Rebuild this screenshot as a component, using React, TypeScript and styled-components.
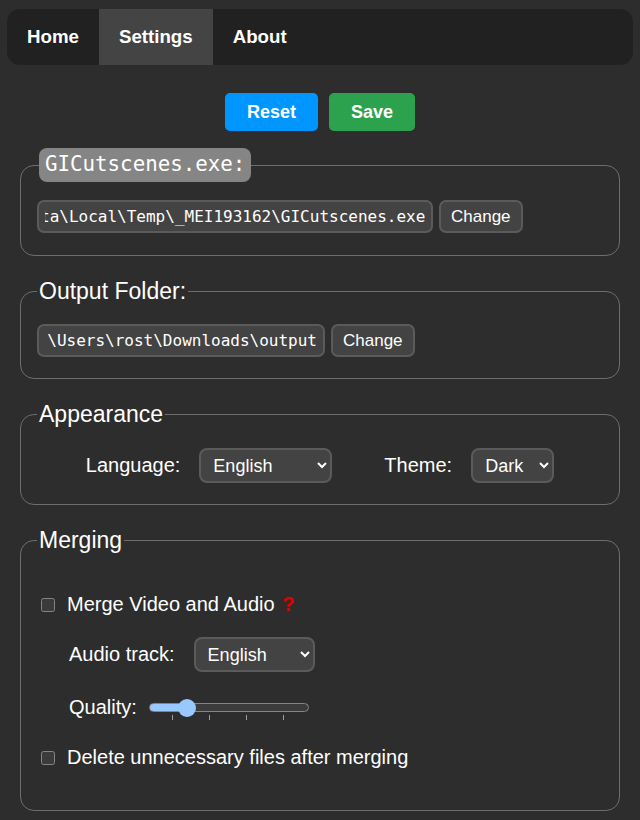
import React, { useEffect, useRef, useState } from "react"
import styled, { createGlobalStyle } from "styled-components"

const GlobalStyle = createGlobalStyle`
  html, body {
    margin: 0;
    background: #2d2d2d;
    color-scheme: dark;
  }
  body {
    font-family: "Liberation Sans", Arial, sans-serif;
    color: #fff;
  }
`

const Page = styled.div`
  padding: 9px 7px 0;
`

const Nav = styled.nav`
  display: flex;
  height: 56px;
  background: #212121;
  border-radius: 13px;
  overflow: hidden;
`

const NavItem = styled.a<{ $active?: boolean }>`
  display: flex;
  align-items: center;
  padding: 0 20px;
  font-size: 18.7px;
  font-weight: bold;
  color: #fff;
  text-decoration: none;
  background: ${(p) => (p.$active ? "#444444" : "transparent")};
`

const Actions = styled.div`
  display: flex;
  justify-content: center;
  gap: 11px;
  margin-top: 28px;
`

const ActionBtn = styled.button<{ $color: string }>`
  height: 38px;
  padding: 0 22px;
  border: none;
  border-radius: 5px;
  background: ${(p) => p.$color};
  color: #fff;
  font: bold 18px "Liberation Sans", Arial, sans-serif;
`

const Fieldset = styled.fieldset<{ $first?: boolean; $pt?: number; $pb?: number }>`
  margin: ${(p) => (p.$first ? "17px" : "22px")} 13px 0;
  padding: ${(p) => p.$pt ?? 20}px 16px ${(p) => p.$pb ?? 21}px;
  border: 1px solid #6e6e6e;
  border-radius: 14px;
  min-width: 0;
`

const Legend = styled.legend`
  padding: 0 2px;
  font-size: 23px;
  color: #fff;
`

const FileLegend = styled.legend`
  margin-left: 2px;
  padding: 4px 6px 6px;
  background: #858585;
  border-radius: 8px;
  font: 20.8px "DejaVu Sans Mono", monospace;
  color: #fff;
`

const PathRow = styled.div`
  display: flex;
  align-items: center;
  gap: 6px;
`

const PathInput = styled.input<{ $w: number }>`
  box-sizing: border-box;
  width: ${(p) => p.$w}px;
  height: 33px;
  padding: 0 6px;
  background: #434343;
  color: #fff;
  border: 2px solid #5b5b5b;
  border-radius: 7px;
  font: 16px "DejaVu Sans Mono", monospace;
  outline: none;
`

const ChangeBtn = styled.button`
  box-sizing: border-box;
  height: 33px;
  padding: 0 10px;
  background: #434343;
  color: #fff;
  border: 2px solid #5b5b5b;
  border-radius: 7px;
  font: 17px "Liberation Sans", Arial, sans-serif;
`

const CenterRow = styled.div`
  display: flex;
  justify-content: center;
  align-items: center;
  gap: 52px;
`

const Field = styled.label<{ $indent?: number; $gap?: number }>`
  display: flex;
  align-items: center;
  gap: ${(p) => p.$gap ?? 19}px;
  font-size: 20px;
  padding-left: ${(p) => p.$indent ?? 0}px;
`

const Select = styled.select<{ $w: number }>`
  box-sizing: border-box;
  width: ${(p) => p.$w}px;
  height: 35px;
  padding: 0 6px 0 8px;
  background: #434343;
  color: #fff;
  border: 2px solid #5b5b5b;
  border-radius: 8px;
  font: 18px "Liberation Sans", Arial, sans-serif;
`

const Rows = styled.div`
  display: flex;
  flex-direction: column;
  gap: 15px;
`

const Row = styled.div<{ $h?: number; $mt?: number }>`
  display: flex;
  align-items: center;
  min-height: ${(p) => p.$h ?? 35}px;
  margin-top: ${(p) => p.$mt ?? 0}px;
`

const CheckLabel = styled.label`
  display: flex;
  align-items: center;
  gap: 12px;
  font-size: 20px;
`

const Check = styled.input`
  width: 14px;
  height: 14px;
  margin: 0 0 0 4px;
`

const Help = styled.span`
  color: #e00000;
  font-weight: bold;
  margin-left: 2px;
`

const SliderBox = styled.div`
  position: relative;
  display: flex;
  align-items: center;
`

const Range = styled.input`
  -webkit-appearance: none;
  appearance: none;
  width: 160px;
  height: 18px;
  margin: 0;
  background: transparent;

  &::-webkit-slider-runnable-track {
    height: 9px;
    border: 1px solid #858585;
    border-radius: 6px;
    background: linear-gradient(to right, #99c8ff var(--fill), #3b3b3b var(--fill));
  }
  &::-webkit-slider-thumb {
    -webkit-appearance: none;
    width: 18px;
    height: 18px;
    margin-top: -5px;
    border-radius: 50%;
    background: #99c8ff;
    border: none;
  }
`

const Ticks = styled.div`
  position: absolute;
  left: 23px;
  top: 17px;
  display: flex;
  gap: 36px;
`

const Tick = styled.span`
  width: 1px;
  height: 5px;
  background: #a0a0a0;
`

const ScrolledPath = ({ value, width }: { value: string; width: number }) => {
  const ref = useRef<HTMLInputElement>(null)
  useEffect(() => {
    if (ref.current) ref.current.scrollLeft = ref.current.scrollWidth
  }, [value])
  return <PathInput ref={ref} $w={width} value={value} readOnly />
}

const App = () => {
  const [quality, setQuality] = useState(1)
  const frac = quality / 5
  const fill = ((9 + frac * (160 - 18)) / 160) * 100

  return (
    <Page>
      <GlobalStyle />
      <Nav>
        <NavItem>Home</NavItem>
        <NavItem $active>Settings</NavItem>
        <NavItem>About</NavItem>
      </Nav>

      <Actions>
        <ActionBtn $color="#0096ff">Reset</ActionBtn>
        <ActionBtn $color="#2ca24f">Save</ActionBtn>
      </Actions>

      <Fieldset $first $pt={18} $pb={22}>
        <FileLegend>GICutscenes.exe:</FileLegend>
        <PathRow>
          <ScrolledPath width={396} value="C:\Users\rost\AppData\Local\Temp\_MEI193162\GICutscenes.exe" />
          <ChangeBtn>Change</ChangeBtn>
        </PathRow>
      </Fieldset>

      <Fieldset $pt={19}>
        <Legend>Output Folder:</Legend>
        <PathRow>
          <ScrolledPath width={288} value="C:\Users\rost\Downloads\output" />
          <ChangeBtn>Change</ChangeBtn>
        </PathRow>
      </Fieldset>

      <Fieldset>
        <Legend>Appearance</Legend>
        <CenterRow>
          <Field>
            Language:
            <Select $w={133} defaultValue="en">
              <option value="en">English</option>
              <option value="ru">Русский</option>
            </Select>
          </Field>
          <Field>
            Theme:
            <Select $w={83} defaultValue="dark">
              <option value="dark">Dark</option>
              <option value="light">Light</option>
            </Select>
          </Field>
        </CenterRow>
      </Fieldset>

      <Fieldset $pt={33} $pb={35}>
        <Legend>Merging</Legend>
        <Rows>
          <Row>
            <CheckLabel>
              <Check type="checkbox" />
              <span>
                Merge Video and Audio <Help>?</Help>
              </span>
            </CheckLabel>
          </Row>
          <Row>
            <Field $indent={32}>
              Audio track:
              <Select $w={121} defaultValue="en">
                <option value="en">English</option>
                <option value="jp">Japanese</option>
              </Select>
            </Field>
          </Row>
          <Row $h={36} $mt={2}>
            <Field $indent={32} $gap={12}>
              Quality:
              <SliderBox>
                <Range
                  type="range"
                  min={0}
                  max={5}
                  step={1}
                  value={quality}
                  onChange={(e) => setQuality(Number(e.target.value))}
                  style={{ ["--fill" as string]: `${fill}%` } as React.CSSProperties}
                />
                <Ticks>
                  <Tick />
                  <Tick />
                  <Tick />
                  <Tick />
                </Ticks>
              </SliderBox>
            </Field>
          </Row>
          <Row>
            <CheckLabel>
              <Check type="checkbox" />
              Delete unnecessary files after merging
            </CheckLabel>
          </Row>
        </Rows>
      </Fieldset>
    </Page>
  )
}

export default App
